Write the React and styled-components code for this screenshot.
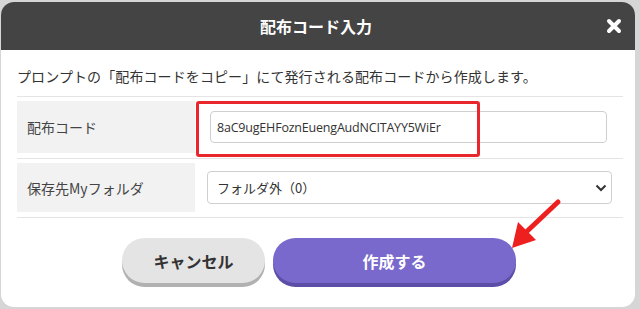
import React from "react";
import styled, { createGlobalStyle } from "styled-components";

const GlobalStyle = createGlobalStyle`
	html, body {
		margin: 0;
		padding: 0;
		background: #d6d6d6;
	}
	body {
		font-family: "Noto Sans CJK JP", "Noto Sans", sans-serif;
	}
`;

export default function App() {
	return (
		<Page>
			<GlobalStyle />
			<Dialog>
				<Header>
					<Title>配布コード入力</Title>
					<CloseButton aria-label="close">
						<svg width="16" height="16" viewBox="0 0 16 16">
							<path
								d="M3 3 L13 13 M13 3 L3 13"
								stroke="#fff"
								strokeWidth="4"
								strokeLinecap="round"
							/>
						</svg>
					</CloseButton>
				</Header>
				<Body>
					<Description>
						プロンプトの「配布コードをコピー」にて発行される配布コードから作成します。
					</Description>
					<FormTable>
						<Row>
							<Label $height="52px">配布コード</Label>
							<Value $padLeft="15px" $padRight="16px">
								<TextInput
									readOnly
									value="8aC9ugEHFoznEuengAudNCITAYY5WiEr"
								/>
							</Value>
						</Row>
						<Row>
							<Label $height="49px">保存先Myフォルダ</Label>
							<Value $padLeft="12px" $padRight="11px">
								<SelectBox>
									<span>フォルダ外（0）</span>
									<svg width="12" height="8" viewBox="0 0 12 8">
										<path
											d="M1.5 1.5 L6 6 L10.5 1.5"
											fill="none"
											stroke="#333"
											strokeWidth="2"
										/>
									</svg>
								</SelectBox>
							</Value>
						</Row>
					</FormTable>
					<Actions>
						<Button $variant="cancel">キャンセル</Button>
						<Button $variant="primary">作成する</Button>
					</Actions>
				</Body>
			</Dialog>
			<Highlight />
			<Arrow width="60" height="60" viewBox="0 0 60 60">
				<path d="M48 4 L12 38" stroke="#ee1f1f" strokeWidth="5" strokeLinecap="round" />
				<path d="M2 50 L8 24 L26 42 Z" fill="#ee1f1f" />
			</Arrow>
		</Page>
	);
}

const Page = styled.div`
	position: relative;
	width: 640px;
	height: 309px;
	overflow: hidden;
	padding: 2px 0 0 1px;
	box-sizing: border-box;
`;

const Dialog = styled.div`
	width: 634px;
	height: 305px;
	background: #fff;
	border-radius: 13px;
	overflow: hidden;
	display: flex;
	flex-direction: column;
`;

const Header = styled.div`
	position: relative;
	height: 48px;
	background: #444444;
	display: flex;
	align-items: center;
	justify-content: center;
`;

const Title = styled.h1`
	margin: 0;
	color: #fff;
	font-size: 16px;
	font-weight: 700;
	padding-right: 4px;
`;

const CloseButton = styled.div`
	position: absolute;
	right: 13px;
	top: 16px;
	width: 16px;
	height: 16px;
	display: flex;
`;

const Body = styled.div`
	padding: 0 12px 0 16px;
`;

const Description = styled.p`
	margin: 0;
	padding-top: 16px;
	padding-bottom: 9px;
	line-height: 21px;
	font-size: 14px;
	color: #333;
	letter-spacing: 0.1px;
`;

const FormTable = styled.div`
	border-top: 1px solid #e4e4e4;
`;

const Row = styled.div`
	display: flex;
	align-items: center;
	padding: 4px 0 5px 0;
	border-bottom: 1px solid #e4e4e4;
`;

const Label = styled.div`
	width: 168px;
	height: ${({ $height }) => $height};
	padding-left: 10px;
	background: #f2f2f2;
	display: flex;
	align-items: center;
	font-size: 14px;
	color: #444;
`;

const Value = styled.div`
	flex: 1;
	padding-left: ${({ $padLeft }) => $padLeft};
	padding-right: ${({ $padRight }) => $padRight};
`;

const TextInput = styled.input`
	display: block;
	width: 100%;
	height: 32px;
	box-sizing: border-box;
	border: 1px solid #cfcfcf;
	border-radius: 4px;
	padding: 0 6px;
	font-family: "Open Sans", "Noto Sans", sans-serif;
	font-size: 12.5px;
	color: #333;
	outline: none;
	letter-spacing: -0.2px;
`;

const SelectBox = styled.div`
	height: 33px;
	box-sizing: border-box;
	border: 1px solid #cfcfcf;
	border-radius: 4px;
	padding: 0 4px 0 9px;
	display: flex;
	align-items: center;
	justify-content: space-between;
	font-size: 13px;
	color: #333;
`;

const Actions = styled.div`
	display: flex;
	justify-content: center;
	gap: 8px;
	margin-top: 20px;
	padding-right: 2px;
`;

const Button = styled.div`
	height: 45px;
	width: ${({ $variant }) => ($variant === "primary" ? "243px" : "143px")};
	border-radius: 24px;
	display: flex;
	align-items: center;
	justify-content: center;
	font-size: 16px;
	font-weight: 700;
	color: ${({ $variant }) => ($variant === "primary" ? "#fff" : "#333")};
	background: ${({ $variant }) =>
		$variant === "primary" ? "#7a69cd" : "#e4e4e4"};
	box-shadow: 0 4px 0
		${({ $variant }) => ($variant === "primary" ? "#5c4da6" : "#b1b1b1")};
`;

const Highlight = styled.div`
	position: absolute;
	left: 196px;
	top: 101px;
	width: 284px;
	height: 56px;
	box-sizing: border-box;
	border: 3px solid #e8262b;
	border-radius: 3px;
	pointer-events: none;
`;

const Arrow = styled.svg`
	position: absolute;
	left: 510px;
	top: 198px;
`;
